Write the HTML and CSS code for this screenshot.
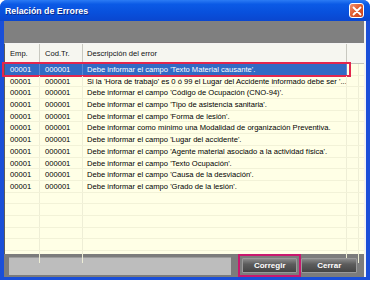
FILE: index.html
```html
<!DOCTYPE html>
<html lang="es">
<head>
  <meta charset="UTF-8">
  <meta name="viewport" content="width=device-width, initial-scale=1.0">
  <title>Relación de Errores</title>
  <link rel="stylesheet" href="styles.css">
</head>
<body>
  <div class="window">
    <div class="titlebar">
      <span class="title">Relación de Errores</span>
      <span class="close">
        <svg width="10" height="10" viewBox="0 0 10 10">
          <path d="M1.5 1.5 L8.5 8.5 M8.5 1.5 L1.5 8.5" stroke="#fff" stroke-width="1.8" stroke-linecap="round"/>
        </svg>
      </span>
    </div>
    <div class="client">
      <div class="toolbar"></div>
      <div class="list">
        <div class="row header">
          <div class="cell emp">Emp.</div>
          <div class="cell cod">Cod.Tr.</div>
          <div class="cell desc">Descripción del error</div>
          <div class="cell extra"></div>
        </div>
        <div class="row selected">
          <div class="cell emp">00001</div>
          <div class="cell cod">000001</div>
          <div class="cell desc">Debe informar el campo 'Texto Material causante'.</div>
          <div class="cell extra"></div>
        </div>
        <div class="row">
          <div class="cell emp">00001</div>
          <div class="cell cod">000001</div>
          <div class="cell desc">Si la 'Hora de trabajo' es 0 ó 99 el Lugar del Accidente informado debe ser '...</div>
          <div class="cell extra"></div>
        </div>
        <div class="row">
          <div class="cell emp">00001</div>
          <div class="cell cod">000001</div>
          <div class="cell desc">Debe informar el campo 'Código de Ocupación (CNO-94)'.</div>
          <div class="cell extra"></div>
        </div>
        <div class="row">
          <div class="cell emp">00001</div>
          <div class="cell cod">000001</div>
          <div class="cell desc">Debe informar el campo 'Tipo de asistencia sanitaria'.</div>
          <div class="cell extra"></div>
        </div>
        <div class="row">
          <div class="cell emp">00001</div>
          <div class="cell cod">000001</div>
          <div class="cell desc">Debe informar el campo 'Forma de lesión'.</div>
          <div class="cell extra"></div>
        </div>
        <div class="row">
          <div class="cell emp">00001</div>
          <div class="cell cod">000001</div>
          <div class="cell desc">Debe informar como mínimo una Modalidad de organización Preventiva.</div>
          <div class="cell extra"></div>
        </div>
        <div class="row">
          <div class="cell emp">00001</div>
          <div class="cell cod">000001</div>
          <div class="cell desc">Debe informar el campo 'Lugar del accidente'.</div>
          <div class="cell extra"></div>
        </div>
        <div class="row">
          <div class="cell emp">00001</div>
          <div class="cell cod">000001</div>
          <div class="cell desc">Debe informar el campo 'Agente material asociado a la actividad física'.</div>
          <div class="cell extra"></div>
        </div>
        <div class="row">
          <div class="cell emp">00001</div>
          <div class="cell cod">000001</div>
          <div class="cell desc">Debe informar el campo 'Texto Ocupación'.</div>
          <div class="cell extra"></div>
        </div>
        <div class="row">
          <div class="cell emp">00001</div>
          <div class="cell cod">000001</div>
          <div class="cell desc">Debe informar el campo 'Causa de la desviación'.</div>
          <div class="cell extra"></div>
        </div>
        <div class="row">
          <div class="cell emp">00001</div>
          <div class="cell cod">000001</div>
          <div class="cell desc">Debe informar el campo 'Grado de la lesión'.</div>
          <div class="cell extra"></div>
        </div>
        <!-- empty grid rows -->
        <div class="row"><div class="cell emp"></div><div class="cell cod"></div><div class="cell desc"></div><div class="cell extra"></div></div>
        <div class="row"><div class="cell emp"></div><div class="cell cod"></div><div class="cell desc"></div><div class="cell extra"></div></div>
        <div class="row"><div class="cell emp"></div><div class="cell cod"></div><div class="cell desc"></div><div class="cell extra"></div></div>
        <div class="row"><div class="cell emp"></div><div class="cell cod"></div><div class="cell desc"></div><div class="cell extra"></div></div>
        <div class="row"><div class="cell emp"></div><div class="cell cod"></div><div class="cell desc"></div><div class="cell extra"></div></div>
        <div class="row last"><div class="cell emp"></div><div class="cell cod"></div><div class="cell desc"></div><div class="cell extra"></div></div>
      </div>
      <div class="bottombar">
        <div class="status"></div>
        <button class="btn marked">Corregir</button>
        <button class="btn">Cerrar</button>
      </div>
    </div>
  </div>
</body>
</html>
```

FILE: styles.css
```css
body {
  margin: 0;
  background: #fff;
  font-family: "Liberation Sans", Arial, sans-serif;
}
.window {
  width: 370px;
  height: 280px;
  display: flex;
  flex-direction: column;
  background: #1a4fd8;
  border-radius: 7px 7px 0 0;
}
.titlebar {
  height: 21px;
  flex: none;
  display: flex;
  align-items: center;
  justify-content: space-between;
  padding: 0 6px 0 5px;
  border-radius: 7px 7px 0 0;
  background: linear-gradient(#2b7bf4 0%, #0b5ae6 20%, #0850dc 60%, #0a46cf 100%);
}
.title {
  color: #fff;
  font-size: 8.8px;
  font-weight: bold;
  text-shadow: 1px 1px 0 #0a2a8a;
}
.close {
  width: 13px;
  height: 13px;
  display: flex;
  align-items: center;
  justify-content: center;
  border: 1px solid #fff;
  border-radius: 3px;
  background: linear-gradient(135deg, #f09070 0%, #e05a2c 50%, #c8401a 100%);
}
.client {
  flex: 1;
  margin: 0 4px 3px 4px;
  display: flex;
  flex-direction: column;
  background: #808080;
  border-right: 2px solid #f2f2f2;
}
.toolbar {
  height: 22px;
  flex: none;
  background: #808080;
}
.list {
  height: 210px;
  flex: none;
  border-top: 1px solid #f4f4f4;
  border-left: 1px solid #5a5a5a;
  background: #ffffe6;
  font-size: 7.6px;
  color: #000;
}
.row {
  display: flex;
  height: 11.7px;
  line-height: 11.7px;
  border-bottom: 1px solid #f2f2d8;
  box-sizing: border-box;
  position: relative;
}
.row.last {
  border-bottom: none;
}
.cell {
  white-space: nowrap;
  overflow: hidden;
  border-right: 1px solid #eeeed6;
  box-sizing: border-box;
}
.emp { width: 35px; padding-left: 5px; }
.cod { width: 43px; padding-left: 5px; }
.desc { width: 264px; padding-left: 4px; }
.extra { width: 12px; }
.header {
  height: 20px;
  line-height: 20px;
  background: #f6f6f0;
  border-bottom: 1px solid #c4c4bc;
  color: #101010;
}
.header .cell {
  border-right: 1px solid #c8c8c0;
}
.header .extra {
  width: 16px;
  border-right: none;
}
.selected .emp,
.selected .cod,
.selected .desc {
  background: #316ac5;
  color: #fff;
  border-right-color: #5a88d4;
}
.selected::after {
  content: "";
  position: absolute;
  left: -3px;
  top: -2px;
  width: 345px;
  height: 11px;
  border: 2px solid #e2264e;
}
.bottombar {
  flex: 1;
  display: flex;
  align-items: center;
  gap: 4px;
  padding: 0 7px 0 5px;
  background: #7c7c7c;
}
.status {
  width: 224px;
  height: 17px;
  background: #bdbdbd;
  border-top: 1px solid #9c9c9c;
  margin-right: 7px;
}
.btn {
  width: 56px;
  height: 15px;
  padding: 0;
  border: 1px solid #9a9a9a;
  border-radius: 1px;
  background: linear-gradient(#8a8a8a 0%, #5c5c5c 40%, #454545 100%);
  color: #fff;
  font-family: "Liberation Sans", Arial, sans-serif;
  font-size: 8px;
  font-weight: bold;
  position: relative;
}
.marked::after {
  content: "";
  position: absolute;
  left: -5px;
  top: -5px;
  right: -5px;
  bottom: -5px;
  border: 2px solid #c8186e;
}
```
